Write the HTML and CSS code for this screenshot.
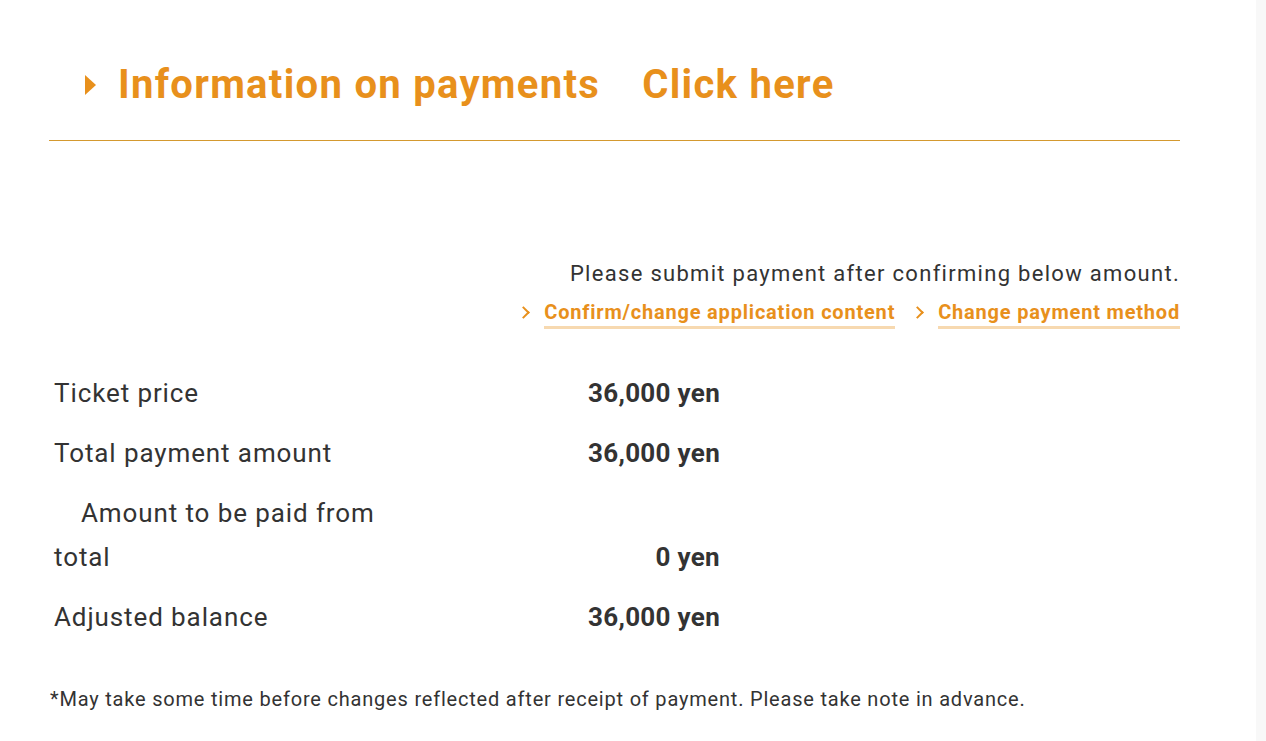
FILE: index.html
```html
<!DOCTYPE html>
<html lang="en">
  <head>
    <meta charset="UTF-8" />
    <meta name="viewport" content="width=device-width, initial-scale=1.0" />
    <title>Information on payments</title>
    <link rel="stylesheet" href="styles.css">
  </head>
  <body>
    <div class="page">
      <div class="content">
        <h2 class="heading">
          <span class="arrow"></span>
          <a href="#">Information on payments&emsp;Click here</a>
        </h2>

        <div class="notice">
          <p class="lead">Please submit payment after confirming below amount.</p>
          <div class="links">
            <a class="link" href="#">Confirm/change application content</a>
            <a class="link" href="#">Change payment method</a>
          </div>
        </div>

        <table class="amounts">
          <tr>
            <th>Ticket price</th>
            <td>36,000 yen</td>
          </tr>
          <tr>
            <th>Total payment amount</th>
            <td>36,000 yen</td>
          </tr>
          <tr>
            <th>&#12288;Amount to be paid from total</th>
            <td>0 yen</td>
          </tr>
          <tr>
            <th>Adjusted balance</th>
            <td>36,000 yen</td>
          </tr>
        </table>

        <p class="note">*May take some time before changes reflected after receipt of payment. Please take note in advance.</p>
      </div>
      <div class="scrollbar"></div>
    </div>
  </body>
</html>
```

FILE: styles.css
```css
body {
  margin: 0;
  font-family: Roboto, "Noto Sans", sans-serif;
  color: #333;
  background: #fff;
}

.page {
  display: flex;
  min-height: 741px;
}

.content {
  flex: 1;
  padding: 0 76px 0 49px;
}

.scrollbar {
  width: 10px;
  background: #f8f8f8;
}

.heading {
  display: flex;
  align-items: center;
  margin: 0;
  padding: 59px 0 29px 36px;
  font-size: 40px;
  line-height: 52px;
  letter-spacing: 1.3px;
  border-bottom: 1px solid #d4992f;
}

.heading a {
  color: #e8901c;
  text-decoration: none;
}

.arrow {
  width: 0;
  height: 0;
  border-top: 10px solid transparent;
  border-bottom: 10px solid transparent;
  border-left: 11px solid #e8901c;
  margin-right: 22px;
}

.notice {
  margin-top: 117px;
  text-align: right;
}

.lead {
  margin: 0;
  font-size: 22px;
  line-height: 32px;
  letter-spacing: 1.3px;
}

.links {
  display: flex;
  justify-content: flex-end;
  gap: 18px;
  margin-top: 8px;
}

.link {
  position: relative;
  padding-left: 25px;
  font-size: 20px;
  font-weight: bold;
  line-height: 28px;
  letter-spacing: 0.8px;
  color: #e8901c;
  text-decoration: none;
}

.link::before {
  content: "";
  position: absolute;
  left: 0;
  top: 10px;
  width: 7px;
  height: 7px;
  border-top: 2.5px solid #e8901c;
  border-right: 2.5px solid #e8901c;
  transform: rotate(45deg);
}

.link::after {
  content: "";
  position: absolute;
  left: 25px;
  right: 0;
  bottom: -3px;
  height: 3px;
  background: #f7d9b0;
}

.amounts {
  margin-top: 37px;
  border-collapse: collapse;
  font-size: 26px;
}

.amounts th {
  width: 325px;
  padding: 8px 5px;
  font-weight: normal;
  text-align: left;
  line-height: 44px;
  letter-spacing: 0.9px;
}

.amounts td {
  width: 336px;
  padding: 8px 0;
  font-weight: bold;
  text-align: right;
  vertical-align: bottom;
  line-height: 44px;
  letter-spacing: 0.3px;
}

.note {
  margin: 40px 0 0 1px;
  font-size: 20px;
  letter-spacing: 0.8px;
}
```
